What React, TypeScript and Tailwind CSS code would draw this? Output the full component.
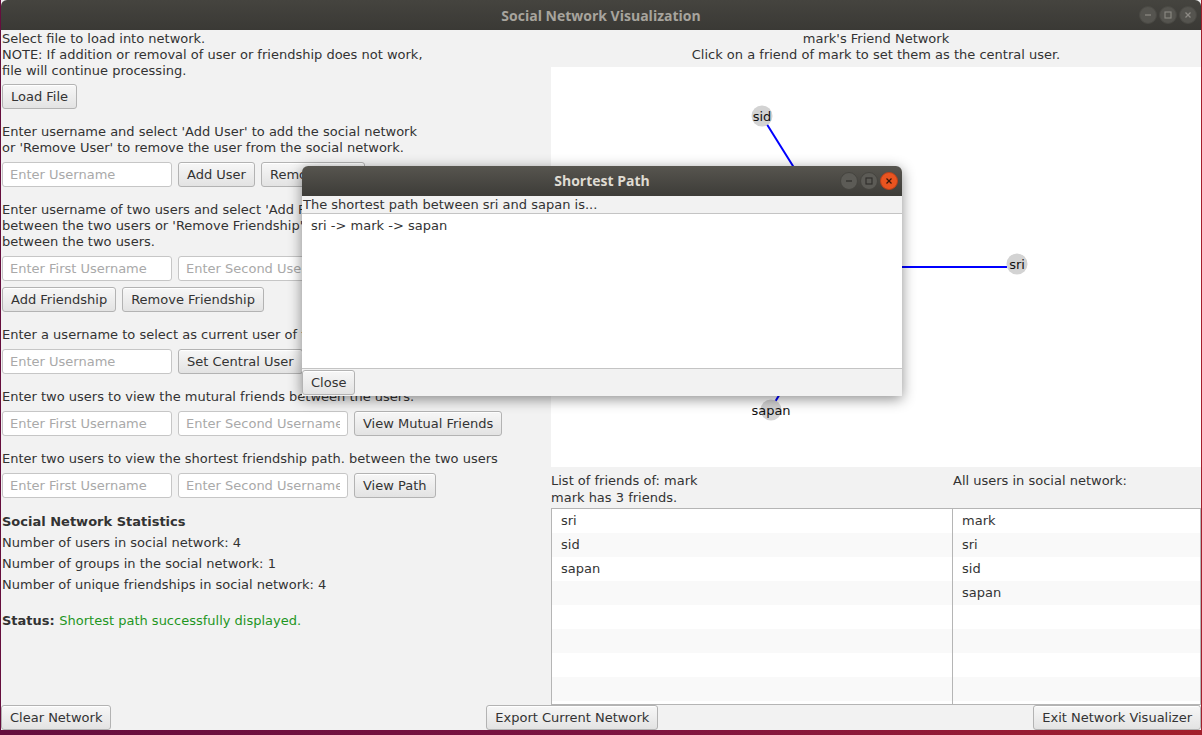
import React from "react";

const font = { fontFamily: '"DejaVu Sans", sans-serif' };
const titleFont = { fontFamily: '"Open Sans", "DejaVu Sans", sans-serif' };

const Btn = ({ children, className = "" }: { children: React.ReactNode; className?: string }) => (
    <button
        className={
            "h-[25px] px-[8px] rounded-[3px] border border-[#b3b3b3] bg-linear-to-b from-[#f7f7f7] to-[#e3e3e3] text-[#333] text-[13px] leading-none whitespace-nowrap shadow-[inset_0_1px_0_#ffffff] " +
            className
        }
    >
        {children}
    </button>
);

const Field = ({ placeholder }: { placeholder: string }) => (
    <input
        placeholder={placeholder}
        className="h-[25px] w-[170px] px-[7px] rounded-[3px] border border-[#c6c6c6] bg-white text-[13px] text-[#333] placeholder:text-[#a9a9a9] outline-none"
    />
);

const WinButtons = ({ active }: { active?: boolean }) => (
    <div className="flex items-center gap-[2px]">
        {["min", "max", "close"].map((k) => {
            const isClose = k === "close";
            const bg = active && isClose ? "bg-[#e95420] border-[#b8401a]" : active ? "bg-[#5c5b56] border-[#45443f]" : "bg-[#55544f] border-[#4a4944]";
            const stroke = active ? (isClose ? "#3a1608" : "#2e2d2a") : "#8c8a84";
            return (
                <div key={k} className={"w-[18px] h-[18px] rounded-full border flex items-center justify-center " + bg}>
                    <svg width="10" height="10" viewBox="0 0 10 10">
                        {k === "min" && <line x1="2" y1="5" x2="8" y2="5" stroke={stroke} strokeWidth="1.2" />}
                        {k === "max" && <rect x="2" y="2" width="6" height="6" fill="none" stroke={stroke} strokeWidth="1.1" />}
                        {isClose && (
                            <g stroke={stroke} strokeWidth="1.2">
                                <line x1="2.5" y1="2.5" x2="7.5" y2="7.5" />
                                <line x1="7.5" y1="2.5" x2="2.5" y2="7.5" />
                            </g>
                        )}
                    </svg>
                </div>
            );
        })}
    </div>
);

const Node = ({ x, y, label }: { x: number; y: number; label: string }) => (
    <g>
        <circle cx={x} cy={y} r={10.5} fill="#d3d3d3" />
        <text x={x} y={y + 5} textAnchor="middle" fontSize="13" fill="#111" style={font}>
            {label}
        </text>
    </g>
);

const FriendGraph = () => (
    <svg width="650" height="400" className="block">
        <g stroke="#0000ff" strokeWidth="2">
            <line x1="212" y1="51" x2="305" y2="200" />
            <line x1="305" y1="200" x2="456" y2="200" />
            <line x1="221" y1="340" x2="305" y2="200" />
        </g>
        <Node x={211} y={49} label="sid" />
        <Node x={466} y={197} label="sri" />
        <Node x={220} y={343} label="sapan" />
    </svg>
);

const ListBox = ({ items, className = "" }: { items: string[]; className?: string }) => {
    const rows = Array.from({ length: 9 }, (_, i) => items[i] ?? "");
    return (
        <div className={"h-[197px] overflow-hidden bg-white border border-[#b5b5b5] " + className}>
            {rows.map((r, i) => (
                <div key={i} className={"h-[24px] flex items-center pl-[9px] text-[13px] text-[#333] " + (i % 2 === 1 ? "bg-[#f9f9f9]" : "bg-white")}>
                    {r}
                </div>
            ))}
        </div>
    );
};

export default function App() {
    return (
        <div className="w-[1202px] h-[735px] overflow-hidden bg-linear-to-r from-[#650d3d] via-[#7c1340] to-[#a31f2b]" style={font}>
            <div className="relative mx-[1px] w-[1200px] h-[730px] flex flex-col bg-[#f2f2f2]">
                {/* title bar */}
                <div className="h-[30px] shrink-0 rounded-t-[6px] bg-linear-to-b from-[#45443f] to-[#3a3935] relative flex items-center justify-center">
                    <span className="text-[14px] font-bold text-[#a7a49d]" style={titleFont}>
                        Social Network Visualization
                    </span>
                    <div className="absolute right-[4px] top-[6px]">
                        <WinButtons />
                    </div>
                </div>

                <div className="flex flex-1 min-h-0 text-[13px] text-[#333] leading-[16px]">
                    {/* left controls */}
                    <div className="w-[550px] pl-[1px] pt-[1px] flex flex-col">
                        <p>Select file to load into network.</p>
                        <p>NOTE: If addition or removal of user or friendship does not work,</p>
                        <p>file will continue processing.</p>
                        <div className="mt-[5px]">
                            <Btn>Load File</Btn>
                        </div>

                        <p className="mt-[15px]">Enter username and select 'Add User' to add the social network</p>
                        <p>or 'Remove User' to remove the user from the social network.</p>
                        <div className="mt-[6px] flex gap-[6px]">
                            <Field placeholder="Enter Username" />
                            <Btn>Add User</Btn>
                            <Btn>Remove User</Btn>
                        </div>

                        <p className="mt-[15px]">Enter username of two users and select 'Add Friendship' to add friendship</p>
                        <p>between the two users or 'Remove Friendship' to remove the friendship</p>
                        <p>between the two users.</p>
                        <div className="mt-[6px] flex gap-[6px]">
                            <Field placeholder="Enter First Username" />
                            <Field placeholder="Enter Second Username" />
                        </div>
                        <div className="mt-[6px] flex gap-[6px]">
                            <Btn>Add Friendship</Btn>
                            <Btn>Remove Friendship</Btn>
                        </div>

                        <p className="mt-[15px]">Enter a username to select as current user of the social network.</p>
                        <div className="mt-[6px] flex gap-[6px]">
                            <Field placeholder="Enter Username" />
                            <Btn>Set Central User</Btn>
                        </div>

                        <p className="mt-[15px]">Enter two users to view the mutural friends between the users.</p>
                        <div className="mt-[6px] flex gap-[6px]">
                            <Field placeholder="Enter First Username" />
                            <Field placeholder="Enter Second Username" />
                            <Btn>View Mutual Friends</Btn>
                        </div>

                        <p className="mt-[15px]">Enter two users to view the shortest friendship path. between the two users</p>
                        <div className="mt-[6px] flex gap-[6px]">
                            <Field placeholder="Enter First Username" />
                            <Field placeholder="Enter Second Username" />
                            <Btn>View Path</Btn>
                        </div>

                        <p className="mt-[16px] font-bold">Social Network Statistics</p>
                        <div className="mt-[5px] flex flex-col gap-[5px]">
                            <p>Number of users in social network: 4</p>
                            <p>Number of groups in the social network: 1</p>
                            <p>Number of unique friendships in social network: 4</p>
                        </div>
                        <p className="mt-[20px]">
                            <span className="font-bold">Status: </span>
                            <span className="text-[#1f961f]">Shortest path successfully displayed.</span>
                        </p>
                    </div>

                    {/* right graph panel */}
                    <div className="w-[650px] flex flex-col">
                        <div className="text-center pt-[1px] h-[37px]">
                            <p>mark's Friend Network</p>
                            <p>Click on a friend of mark to set them as the central user.</p>
                        </div>
                        <div className="h-[400px] bg-white">
                            <FriendGraph />
                        </div>
                        <div className="flex pt-[6px] h-[41px]">
                            <div className="w-[402px]">
                                <p>List of friends of: mark</p>
                                <p className="mt-[1px]">mark has 3 friends.</p>
                            </div>
                            <p>All users in social network:</p>
                        </div>
                        <div className="flex">
                            <ListBox items={["sri", "sid", "sapan"]} className="w-[402px]" />
                            <ListBox items={["mark", "sri", "sid", "sapan"]} className="w-[248px] border-l-0" />
                        </div>
                    </div>
                </div>

                {/* bottom actions */}
                <div className="h-[25px] shrink-0 flex justify-between">
                    <Btn>Clear Network</Btn>
                    <Btn>Export Current Network</Btn>
                    <Btn>Exit Network Visualizer</Btn>
                </div>

                {/* Shortest Path dialog */}
                <div className="absolute left-[301px] top-[166px] w-[600px] h-[230px] flex flex-col bg-[#f2f2f2] rounded-t-[6px] shadow-[0_3px_14px_rgba(0,0,0,0.45)] text-[13px] text-[#333]">
                    <div className="h-[30px] shrink-0 rounded-t-[6px] bg-linear-to-b from-[#57554f] to-[#3d3c38] relative flex items-center justify-center">
                        <span className="text-[14px] font-bold text-[#dfdbd2] -mt-[2px]" style={titleFont}>
                            Shortest Path
                        </span>
                        <div className="absolute right-[4px] top-[6px]">
                            <WinButtons active />
                        </div>
                    </div>
                    <p className="h-[17px] shrink-0 leading-[17px] pl-[1px] overflow-hidden">The shortest path between sri and sapan is...</p>
                    <div className="h-[156px] shrink-0 bg-white border-y border-[#c4c4c4] px-[9px] pt-[4px] leading-[16px]">
                        <p>sri -&gt; mark -&gt; sapan</p>
                    </div>
                    <div className="pt-[1px]">
                        <Btn>Close</Btn>
                    </div>
                </div>
            </div>
        </div>
    );
}
